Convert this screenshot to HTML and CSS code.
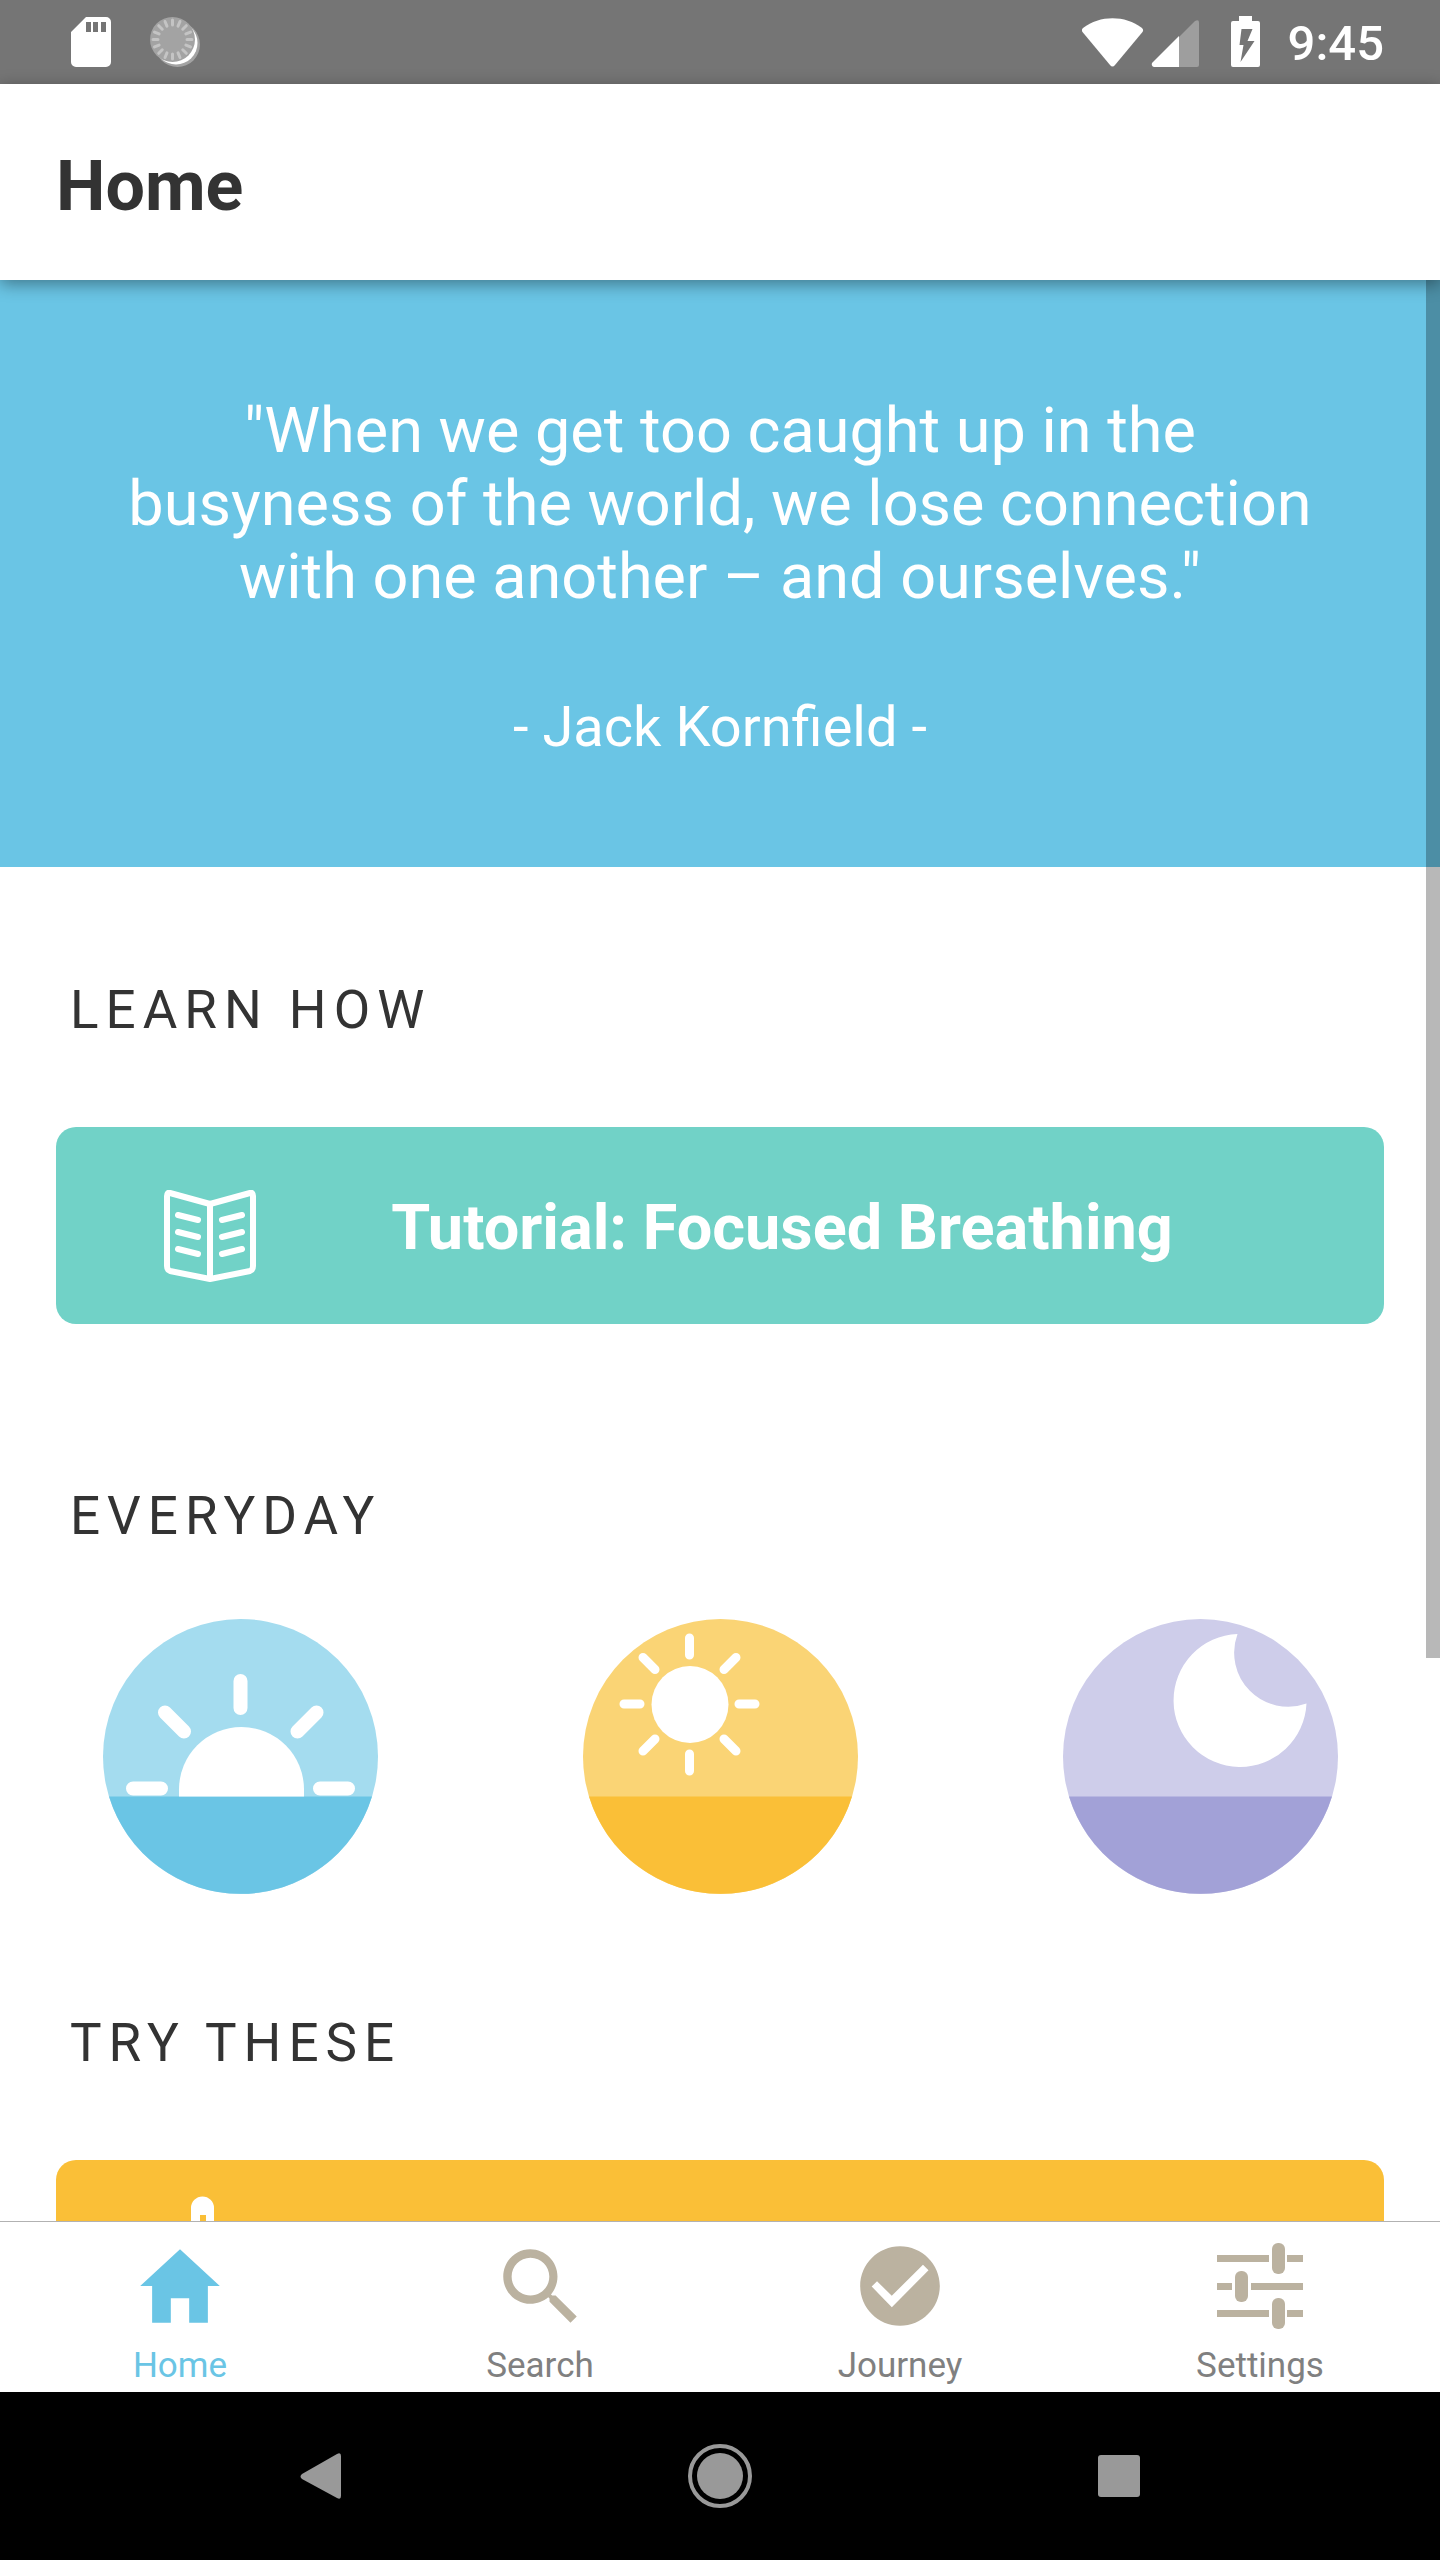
FILE: index.html
```html
<!DOCTYPE html>
<html lang="en">
<head>
<meta charset="utf-8">
<meta name="viewport" content="width=device-width, initial-scale=1">
<title>Home</title>
<link rel="stylesheet" href="styles.css">
</head>
<body>
<div class="status">
  <div class="status-group status-left">
    <svg width="40" height="50" viewBox="0 0 40 50" aria-hidden="true"><path fill="#fff" fill-rule="evenodd" d="M15 0h20a5 5 0 0 1 5 5v40a5 5 0 0 1-5 5H5a5 5 0 0 1-5-5V15zM15 5v10h5V5zM22 5v10h5V5zM30 5v10h5V5z"/></svg>
    <svg width="50" height="50" viewBox="0 0 50 50" aria-hidden="true"><circle cx="27.500" cy="27.500" r="22.500" fill="#a3a3a3"/><circle cx="26" cy="26" r="21.500" fill="#fff"/><circle cx="22.500" cy="22.500" r="22.500" fill="#a3a3a3"/><g stroke="#c4c4c4" stroke-width="3" stroke-linecap="round"><path id="ray" d="M22.500 3v5M22.500 37v5"/><use href="#ray" transform="rotate(22.500 22.500 22.500)"/><use href="#ray" transform="rotate(45 22.500 22.500)"/><use href="#ray" transform="rotate(67.500 22.500 22.500)"/><use href="#ray" transform="rotate(90 22.500 22.500)"/><use href="#ray" transform="rotate(112.500 22.500 22.500)"/><use href="#ray" transform="rotate(135 22.500 22.500)"/><use href="#ray" transform="rotate(157.500 22.500 22.500)"/></g></svg>
  </div>
  <div class="status-group status-right">
    <svg width="182" height="52" viewBox="0 0 182 52" aria-hidden="true"><path fill="#fff" d="M1 12C18-1 43-1 60 12q2 2 .5 4L33 49q-2.500 3-5 0L.5 16Q-1 14 1 12z"/><path fill="#9e9e9e" d="M97 21l16-16q4-2 4 1.500V49q0 2-2 2H97z"/><path fill="#fff" d="M97 20v31H72q-3-1-2-4z"/><path fill="#fff" fill-rule="evenodd" d="M157 0h13v5h6q2 0 2 2v42q0 2-2 2h-25q-2 0-2-2V7q0-2 2-2h6zM159.500 13l-2 16h4l-3 17 14-21h-7l5-12z"/></svg>
    <span class="clock">9:45</span>
  </div>
</div>
<header class="header"><h1 class="title">Home</h1></header>
<main class="content">
  <section class="quote">
    <blockquote class="quote-text">"When we get too caught up in the busyness of the world, we lose connection with one another – and ourselves."</blockquote>
    <p class="quote-author">- Jack Kornfield -</p>
  </section>
  <section class="section">
    <h2 class="section-title">LEARN HOW</h2>
    <button class="card card-teal" type="button">
      <svg class="card-icon" width="92" height="92" viewBox="0 0 92 92" fill="none" stroke="#fff" stroke-width="6" stroke-linejoin="round" stroke-linecap="round" aria-hidden="true"><path d="M46 14L6 3Q3 2 3 6v70q0 4 3 5l40 8 40-8q3-1 3-5V6q0-4-3-3zV88"/><path d="M14 25l20 5M14 42l20 5M14 59l20 5M78 25l-20 5M78 42l-20 5M78 59l-20 5"/></svg>
      <span class="card-label">Tutorial: Focused Breathing</span>
    </button>
  </section>
  <section class="section">
    <h2 class="section-title title-tight">EVERYDAY</h2>
    <div class="circles">
      <button class="circle" type="button" aria-label="Morning"><svg width="275" height="275" viewBox="0 0 275 275" aria-hidden="true"><circle cx="137.500" cy="137.500" r="137.500" fill="#a4dcef"/><path fill="#6ac5e5" d="M6 177.500h263a137.500 137.500 0 0 1-263 0z"/><path fill="#fff" d="M76 177.500v-7a62.500 62.500 0 0 1 125 0v7z"/><path stroke="#fff" stroke-width="14" stroke-linecap="round" d="M137.500 62v27M62 93.500l19 19M213.500 93.500l-19 19M30 169.500h28M217 169.500h28"/></svg></button>
      <button class="circle" type="button" aria-label="Day"><svg width="275" height="275" viewBox="0 0 275 275" aria-hidden="true"><circle cx="137.500" cy="137.500" r="137.500" fill="#fad475"/><path fill="#fabf37" d="M6 177.500h263a137.500 137.500 0 0 1-263 0z"/><circle cx="107" cy="85.500" r="38.500" fill="#fff"/><path stroke="#fff" stroke-width="9" stroke-linecap="round" d="M106.500 19v17M106.500 135v17M41 85h16M156 85h16M60 38.500l12 12M153 38.500l-12 12M60 132l12-12M153 132l-12-12"/></svg></button>
      <button class="circle" type="button" aria-label="Night"><svg width="275" height="275" viewBox="0 0 275 275" aria-hidden="true"><circle cx="137.500" cy="137.500" r="137.500" fill="#cecdea"/><path fill="#a2a1d7" d="M6 177.500h263a137.500 137.500 0 0 1-263 0z"/><path fill="#fff" d="M174.500 15A66.500 66.500 0 1 0 243.500 84.500A54 54 0 0 1 174.500 15z"/></svg></button>
    </div>
  </section>
  <section class="section">
    <h2 class="section-title">TRY THESE</h2>
    <button class="card card-yellow" type="button" aria-label="Try this"><svg class="card-icon" width="92" height="124" viewBox="0 0 92 124" aria-hidden="true"><path fill="#fff" fill-rule="evenodd" d="M27 124V12a11.500 11.500 0 0 1 23 0v112zM36 19v105h6V19z"/></svg></button>
  </section>
  <div class="scrollbar"></div>
</main>
<nav class="tabs">
  <a class="tab tab-active" href="#home"><svg width="98" height="98" viewBox="0 0 512 512" aria-hidden="true"><path d="M208 448V320h96v128h97.600V256H464L256 64 48 256h62.400v192z"/></svg>Home</a>
  <a class="tab" href="#search"><svg width="98" height="98" viewBox="0 0 512 512" aria-hidden="true"><path d="M337.509 305.372h-17.501l-6.571-5.486c20.791-25.232 33.922-57.054 33.922-93.257C347.358 127.632 283.896 64 205.135 64 127.452 64 64 127.632 64 206.629s63.452 142.628 142.225 142.628c35.011 0 67.831-13.167 92.991-34.008l6.561 5.487v17.551L415.180 448 448 415.086 337.509 305.372zm-131.284 0c-54.702 0-98.463-43.887-98.463-98.743 0-54.858 43.761-98.742 98.463-98.742 54.700 0 98.462 43.884 98.462 98.742 0 54.856-43.762 98.743-98.462 98.743z"/></svg>Search</a>
  <a class="tab" href="#journey"><svg width="98" height="98" viewBox="0 0 512 512" aria-hidden="true"><path d="M256 48C141.600 48 48 141.600 48 256s93.600 208 208 208 208-93.600 208-208S370.400 48 256 48zm-42.700 318.400L108 259l28-28 77 76 163-162 29 29z"/></svg>Journey</a>
  <a class="tab" href="#settings"><svg width="98" height="98" viewBox="0 0 98 98" aria-hidden="true"><path d="M6 18h52v7H6zM76 18h16v7H76zM6 46h15v7H6zM40 46h52v7H40zM6 73h52v7H6zM76 73h16v7H76z"/><rect x="61" y="6" width="13" height="31" rx="6"/><rect x="24" y="34" width="13" height="31" rx="6"/><rect x="61" y="61" width="13" height="31" rx="6"/></svg>Settings</a>
</nav>
<div class="navbar">
  <button class="nav-button" type="button" aria-label="Back"><svg width="44" height="64" viewBox="0 0 44 64" fill="#999" aria-hidden="true"><path d="M3 30L38 10q4-2 4 2v40q0 4-4 2L3 35q-3-2.500 0-5z"/></svg></button>
  <button class="nav-button" type="button" aria-label="Home screen"><svg width="64" height="64" viewBox="0 0 64 64" aria-hidden="true"><circle cx="32" cy="32" r="30" fill="none" stroke="#999" stroke-width="4"/><circle cx="32" cy="32" r="23" fill="#999"/></svg></button>
  <button class="nav-button" type="button" aria-label="Recent apps"><svg width="44" height="44" viewBox="0 0 44 44" aria-hidden="true"><rect x="1" y="1" width="42" height="42" rx="3" fill="#999"/></svg></button>
</div>
</body>
</html>
```
FILE: styles.css
```css
* { box-sizing: border-box; }

body {
  margin: 0;
  height: 100vh;
  display: flex;
  flex-direction: column;
  background: #fff;
  color: #333;
  font-family: Roboto, "Liberation Sans", sans-serif;
}

h1, h2, p, blockquote { margin: 0; }

button {
  border: 0;
  padding: 0;
  background: none;
  color: inherit;
  font: inherit;
  cursor: pointer;
}

svg { display: block; flex: none; }

.status {
  display: flex;
  justify-content: space-between;
  align-items: center;
  flex: none;
  height: 84px;
  padding: 0 56px 0 71px;
  background: #757575;
}

.status-group { display: flex; align-items: center; }
.status-left { gap: 39px; }
.status-right { gap: 24px; }

.clock {
  padding-top: 3px;
  color: #fff;
  font-size: 49px;
  font-weight: 500;
  line-height: 58px;
}

.header {
  position: relative;
  z-index: 1;
  flex: none;
  display: flex;
  align-items: center;
  height: 196px;
  padding: 8px 56px 0;
  background: #fff;
  box-shadow: 0 4px 16px rgba(0, 0, 0, 0.4);
}

.title { font-size: 70px; line-height: 82px; font-weight: 700; }

.content {
  position: relative;
  flex: 1;
  min-height: 0;
  overflow: hidden;
}

.quote {
  padding: 114px 112px 107px;
  background: #6ac5e5;
  color: #fff;
  text-align: center;
}

.quote-text { font-size: 63px; line-height: 73px; }
.quote-author { margin-top: 81px; font-size: 56px; line-height: 66px; }

.section { padding: 0 56px; }

.section-title {
  padding: 112px 14px 86px;
  font-size: 53px;
  line-height: 62px;
  font-weight: 400;
  letter-spacing: 7px;
}

.title-tight { padding-bottom: 72px; }

.card {
  display: flex;
  align-items: center;
  width: 100%;
  height: 197px;
  margin-bottom: 49px;
  padding: 4px 108px 0;
  border-radius: 20px;
  color: #fff;
}

.card-icon { margin-top: 16px; }

.card-teal { background: #71d2c7; }

.card-yellow {
  align-items: flex-start;
  padding-top: 20px;
  background: #fabf37;
}

.card-label {
  flex: 1;
  padding-left: 32px;
  font-size: 63px;
  line-height: 74px;
  font-weight: 700;
}

.circles {
  display: grid;
  grid-template-columns: repeat(3, 1fr);
  justify-items: center;
  margin: 0 -56px 6px;
}

.circle { border-radius: 50%; }

.scrollbar {
  position: absolute;
  top: 0;
  right: 0;
  width: 14px;
  height: 1378px;
  background: rgba(0, 0, 0, 0.28);
}

.tabs {
  flex: none;
  display: grid;
  grid-template-columns: repeat(4, 1fr);
  height: 171px;
  border-top: 1px solid #b2b2b2;
  background: #fff;
}

.tab {
  display: flex;
  flex-direction: column;
  align-items: center;
  gap: 10px;
  padding-top: 15px;
  color: #808080;
  font-size: 35px;
  line-height: 42px;
  text-decoration: none;
}

.tab svg { fill: #bbb2a0; }
.tab-active { color: #6ac5e5; }
.tab-active svg { fill: #6ac5e5; }

.navbar {
  flex: none;
  display: flex;
  justify-content: center;
  height: 168px;
  background: #000;
}

.nav-button {
  display: flex;
  justify-content: center;
  align-items: center;
  width: 399px;
}
```
